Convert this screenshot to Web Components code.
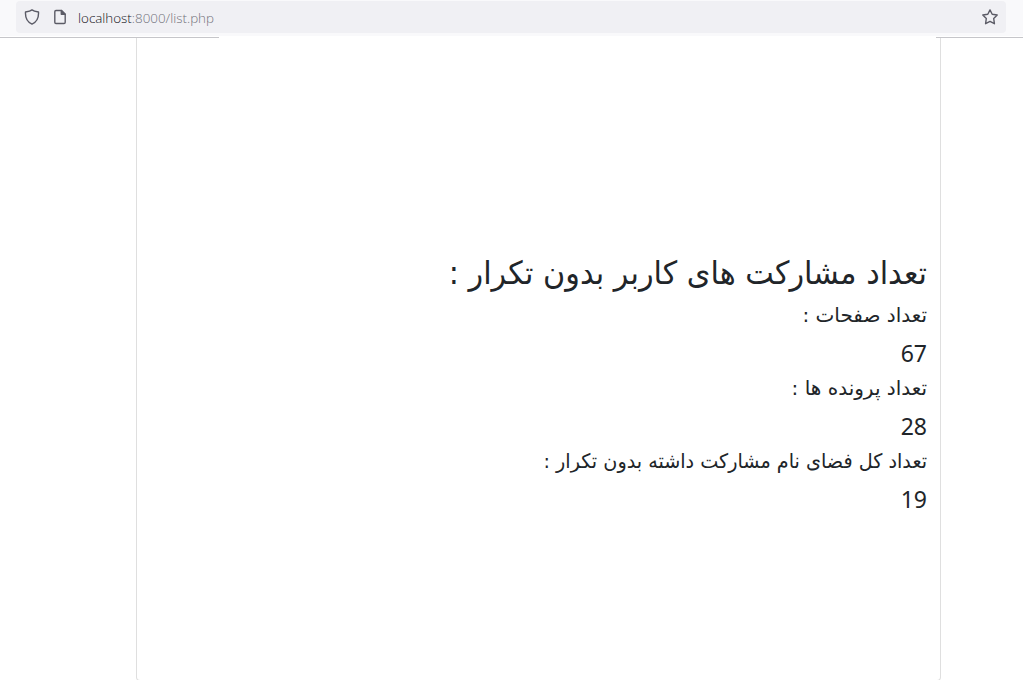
<!DOCTYPE html>
<html lang="fa">
<head>
<meta charset="utf-8">
<title>list.php</title>
<style>
    html, body {
        height: 100%;
        margin: 0;
        overflow: hidden;
        background: #fff;
    }
</style>
</head>
<body>
<app-page></app-page>

<script>
class AddressBar extends HTMLElement{
    constructor(){
        super();
        this.attachShadow({ mode: 'open'});

        this.shadowRoot.innerHTML = `
            <style>
                :host {
                    display: block;
                    flex: none;
                    height: 38px;
                    background: linear-gradient(#f9f9fb, #f9f9fb) 0 0 / 100% 36px no-repeat;
                    font-family: "Open Sans", "Noto Sans", sans-serif;
                }

                .bar {
                    display: flex;
                    align-items: center;
                    box-sizing: border-box;
                    height: 32px;
                    margin: 0 17px 0 16px;
                    padding: 0 8px 0 8px;
                    border-radius: 4px;
                    background: #f0f0f4;
                    transform: translateY(1px);
                }

                svg {
                    display: block;
                    width: 16px;
                    height: 16px;
                    fill: none;
                    stroke: #5b5b66;
                    stroke-width: 1.4;
                    stroke-linejoin: round;
                }

                .page {
                    margin: 0 10px 0 12px;
                }

                .url {
                    flex: 1;
                    padding-top: 2px;
                    font-size: 13.4px;
                    font-weight: 300;
                    line-height: 18px;
                    color: #73737b;
                    white-space: nowrap;
                }

                .host {
                    color: #15141a;
                }

                .lines {
                    display: flex;
                    justify-content: space-between;
                    margin-top: 5px;
                }

                .lines span {
                    height: 1px;
                    background: #c6c6ca;
                }

                .start { width: 219px; }
                .end { width: 87px; }
            </style>
            <div class="bar">
                <svg viewBox="0 0 16 16"><path d="M8 .9C6.5 2.200 3.800 2.700 1.500 3C1.200 8 2.600 12.700 8 15.100C13.400 12.700 14.800 8 14.500 3C12.200 2.700 9.500 2.200 8 .9Z"/></svg>
                <svg class="page" viewBox="0 0 16 16"><path d="M9.500 1.500H4Q2.800 1.500 2.800 2.700V13.300Q2.800 14.500 4 14.500H12Q13.200 14.500 13.200 13.300V5.300Z"/><path d="M9.300 1.500V5.300H13.200Z" fill="#5b5b66"/></svg>
                <div class="url"><span class="host">localhost</span>:8000/list.php</div>
                <svg viewBox="0 0 16 16"><path d="M8 .9L10.200 5.200L15.200 6L11.700 9.500L12.400 14.700L8 12.400L3.600 14.700L4.300 9.500L.8 6L5.800 5.200Z"/></svg>
            </div>
            <div class="lines"><span class="start"></span><span class="end"></span></div>
        `;
    }
}
customElements.define("address-bar", AddressBar);

class CardPanel extends HTMLElement{
    constructor(){
        super();
        this.attachShadow({ mode: 'open'});

        this.shadowRoot.innerHTML = `
            <style>
                :host {
                    display: block;
                    flex: none;
                    box-sizing: border-box;
                    width: 805px;
                    height: 643px;
                    margin-left: 136px;
                    padding: 212px 13px 0;
                    border: 1px solid #dfdfdf;
                    border-top: 0;
                    border-radius: 0 0 4px 4px;
                    direction: rtl;
                    color: #212529;
                }
            </style>
            <slot></slot>
        `;
    }
}
customElements.define("card-panel", CardPanel);

class CardTitle extends HTMLElement{
    constructor(){
        super();
        this.attachShadow({ mode: 'open'});

        this.shadowRoot.innerHTML = `
            <style>
                :host {
                    display: block;
                    margin-bottom: 6px;
                }

                h2 {
                    margin: 0;
                    font: 400 32px/46px "DejaVu Sans", sans-serif;
                    white-space: nowrap;
                    transform: scaleX(.946);
                    transform-origin: right;
                }
            </style>
            <h2><slot></slot></h2>
        `;
    }
}
customElements.define("card-title", CardTitle);

class StatItem extends HTMLElement{
    constructor(){
        super();
        this.attachShadow({ mode: 'open'});

        this.shadowRoot.innerHTML = `
            <style>
                :host {
                    display: block;
                    height: 73px;
                }

                h5 {
                    margin: 0 0 9px;
                    font: 400 20px/26px "DejaVu Sans", sans-serif;
                    white-space: nowrap;
                    transform: scaleX(var(--stretch, 1));
                    transform-origin: right;
                }

                h4 {
                    margin: 0;
                    font: 400 23px/32px "Noto Sans", sans-serif;
                }
            </style>
            <h5><slot></slot></h5>
            <h4></h4>
        `;
    }

    connectedCallback() {
        this.shadowRoot.querySelector("h4").textContent = this.getAttribute("value") || "0";
    }
}
customElements.define("stat-item", StatItem);

class AppPage extends HTMLElement{
    constructor(){
        super();
        this.attachShadow({ mode: 'open'});

        this.shadowRoot.innerHTML = `
            <style>
                :host {
                    display: flex;
                    flex-direction: column;
                    height: 100%;
                }

                .total {
                    --stretch: .959;
                }
            </style>
            <address-bar></address-bar>
            <card-panel>
                <card-title>تعداد مشارکت های کاربر بدون تکرار :</card-title>
                <stat-item value="67">تعداد صفحات :</stat-item>
                <stat-item value="28">تعداد پرونده ها :</stat-item>
                <stat-item class="total" value="19">تعداد کل فضای نام مشارکت داشته بدون تکرار :</stat-item>
            </card-panel>
        `;
    }
}
customElements.define("app-page", AppPage);
</script>
</body>
</html>
